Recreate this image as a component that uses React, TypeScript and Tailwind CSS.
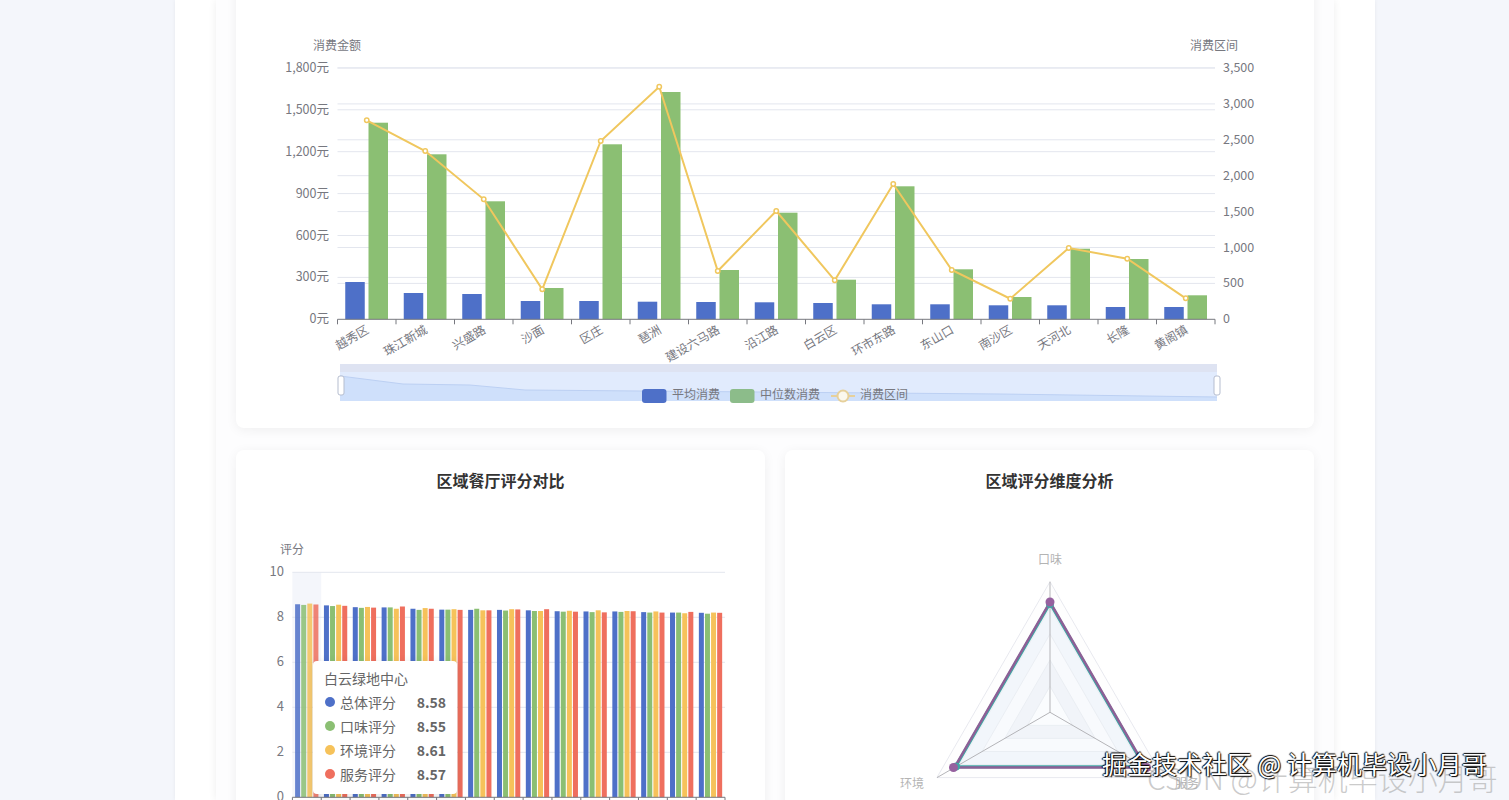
const regions = ['越秀区', '珠江新城', '兴盛路', '沙面', '区庄', '琶洲', '建设六马路', '沿江路', '白云区', '环市东路', '东山口', '南沙区', '天河北', '长隆', '黄阁镇']
const blueTops = [282, 293, 294, 301, 301, 301.7, 302, 302.3, 303, 304.3, 304.3, 305.3, 305.3, 307, 307]
const greenTops = [122.7, 154.3, 201.3, 288, 144.3, 92, 270, 212.7, 279.7, 186.3, 269.3, 297, 248.7, 259, 295.3]
const lineTops = [120.3, 151, 199.3, 289.3, 141, 86.7, 271, 211, 280.3, 184, 270, 298.7, 248, 258.7, 298.3]

const scores = [
  [8.58, 8.55, 8.61, 8.57],
  [8.53, 8.5, 8.56, 8.51],
  [8.45, 8.42, 8.46, 8.43],
  [8.44, 8.44, 8.38, 8.48],
  [8.38, 8.33, 8.41, 8.38],
  [8.34, 8.34, 8.36, 8.33],
  [8.33, 8.38, 8.31, 8.31],
  [8.33, 8.3, 8.36, 8.35],
  [8.31, 8.28, 8.28, 8.36],
  [8.27, 8.25, 8.29, 8.25],
  [8.26, 8.23, 8.31, 8.22],
  [8.26, 8.24, 8.28, 8.27],
  [8.23, 8.21, 8.26, 8.21],
  [8.21, 8.21, 8.18, 8.24],
  [8.2, 8.16, 8.21, 8.2],
]
const scoreColors = ['#4e70c8', '#8bbf73', '#f6c25a', '#ef6f5e']

const tooltipRows = [
  { name: '总体评分', value: '8.58', dot: 'bg-[#4e70c8]' },
  { name: '口味评分', value: '8.55', dot: 'bg-[#8bbf73]' },
  { name: '环境评分', value: '8.61', dot: 'bg-[#f6c25a]' },
  { name: '服务评分', value: '8.57', dot: 'bg-[#ef6f5e]' },
]

const AXIS = '#77787f'
const GRID = '#e3e6ee'

function ConsumptionChart() {
  const x0 = 337.5
  const step = 58.5
  const bottom = 319.3
  const leftTicks = ['0元', '300元', '600元', '900元', '1,200元', '1,500元', '1,800元']
  const rightTicks = ['0', '500', '1,000', '1,500', '2,000', '2,500', '3,000', '3,500']
  const linePoints = lineTops.map((y, i) => `${x0 + step * i + 29.25},${y}`).join(' ')

  return (
    <svg width="1078" height="448" viewBox="236 -20 1078 448" className="block">
      {leftTicks.map((t, i) => {
        const y = bottom - 41.9 * i
        return (
          <g key={t}>
            {i > 0 && <line x1={x0} x2={1215} y1={y} y2={y} stroke={GRID} />}
            <text x={329} y={y + 4} textAnchor="end" fontSize="12.5" fill={AXIS}>{t}</text>
          </g>
        )
      })}
      {rightTicks.map((t, i) => {
        const y = bottom - 35.9 * i
        return (
          <g key={t}>
            {i > 0 && <line x1={x0} x2={1215} y1={y} y2={y} stroke={GRID} />}
            <text x={1223} y={y + 4} fontSize="12.5" fill={AXIS}>{t}</text>
          </g>
        )
      })}
      <text x={337} y={50} textAnchor="middle" fontSize="12" fill={AXIS}>消费金额</text>
      <text x={1214} y={50} textAnchor="middle" fontSize="12" fill={AXIS}>消费区间</text>

      {regions.map((name, i) => {
        const x = x0 + step * i
        const cx = x + 29.25
        return (
          <g key={name}>
            <rect x={x + 7.75} y={blueTops[i]} width={19.5} height={bottom - blueTops[i]} fill="#4e70c8" />
            <rect x={x + 31} y={greenTops[i]} width={19.5} height={bottom - greenTops[i]} fill="#8bbf73" />
            <line x1={x} x2={x} y1={bottom} y2={bottom + 5} stroke={AXIS} />
            <text x={cx} y={333} textAnchor="end" fontSize="12" fill={AXIS} transform={`rotate(-30 ${cx} 327)`}>{name}</text>
          </g>
        )
      })}
      <line x1={1215} x2={1215} y1={bottom} y2={bottom + 5} stroke={AXIS} />
      <line x1={x0} x2={1215} y1={bottom} y2={bottom} stroke={AXIS} />
      <polyline points={linePoints} fill="none" stroke="#f0c75e" strokeWidth="2" />
      {lineTops.map((y, i) => (
        <circle key={i} cx={x0 + step * i + 29.25} cy={y} r="2.2" fill="#fff" stroke="#f0c75e" strokeWidth="1.5" />
      ))}

      {/* data zoom */}
      <rect x={340} y={364} width={877} height={37} fill="#e1ebfd" />
      <rect x={340} y={364} width={877} height={8} fill="#dee3f2" />
      <polygon points="340,376 403,384 470,385 525,390 640,391 1000,394 1217,397 1217,401 340,401" fill="#cfe0fb" />
      <polyline points="340,376 403,384 470,385 525,390 640,391 1000,394 1217,397" fill="none" stroke="#bcd0f3" />
      <rect x={338} y={376} width={6} height={19} rx={2} fill="#fff" stroke="#b5bdcf" />
      <rect x={1214} y={376} width={6} height={19} rx={2} fill="#fff" stroke="#b5bdcf" />

      {/* legend */}
      <rect x={642} y={389} width={24.5} height={14} rx={3} fill="#4e70c8" />
      <text x={672} y={399} fontSize="12" fill={AXIS}>平均消费</text>
      <rect x={730} y={389} width={24.5} height={14} rx={3} fill="#8cbc8a" />
      <text x={760} y={399} fontSize="12" fill={AXIS}>中位数消费</text>
      <line x1={831} x2={855} y1={396} y2={396} stroke="#e6d09b" strokeWidth="2" />
      <circle cx={843} cy={396} r={5.5} fill="#fbf8ee" stroke="#e6d09b" strokeWidth="2" />
      <text x={860} y={399} fontSize="12" fill={AXIS}>消费区间</text>
    </svg>
  )
}

function ScoreChart() {
  const x0 = 292.4
  const step = 28.84
  const bottom = 797.3
  return (
    <svg width="529" height="298" viewBox="236 512 529 298" className="block">
      <rect x={x0} y={572.3} width={step} height={225} fill="#f4f6fb" />
      {[0, 2, 4, 6, 8, 10].map((t) => {
        const y = bottom - t * 22.5
        return (
          <g key={t}>
            {t > 0 && <line x1={x0} x2={725} y1={y} y2={y} stroke={GRID} />}
            <text x={284} y={y + 3.5} textAnchor="end" fontSize="13" fill={AXIS}>{t}</text>
          </g>
        )
      })}
      <text x={292} y={554} textAnchor="middle" fontSize="12" fill={AXIS}>评分</text>
      {scores.map((row, i) => (
        <g key={i} opacity={i === 0 ? 0.85 : 1}>
          {row.map((v, j) => (
            <rect
              key={j}
              x={x0 + step * i + 2.7 + j * 6.1}
              y={bottom - v * 22.5}
              width={5}
              height={v * 22.5}
              fill={scoreColors[j]}
            />
          ))}
        </g>
      ))}
      {scores.map((_, i) => (
        <line key={i} x1={x0 + step * i} x2={x0 + step * i} y1={bottom} y2={bottom + 5} stroke={AXIS} />
      ))}
      <line x1={725} x2={725} y1={bottom} y2={bottom + 5} stroke={AXIS} />
      <line x1={x0} x2={725} y1={bottom} y2={bottom} stroke={AXIS} />
    </svg>
  )
}

function triangle(r: number) {
  const cx = 1050
  const cy = 712.3
  const dx = r * 0.866
  const dy = r * 0.5
  return `${cx},${cy - r} ${cx + dx},${cy + dy} ${cx - dx},${cy + dy}`
}

function RadarChart() {
  const R = 130.6
  return (
    <svg width="529" height="298" viewBox="785 512 529 298" className="block">
      <polygon points={triangle(R)} fill="#fefefe" stroke="#e8e9ef" />
      <polygon points={triangle(R * 0.8)} fill="#f7f9fc" stroke="#eef0f4" />
      <polygon points={triangle(R * 0.6)} fill="#fdfdfe" stroke="#eef0f4" />
      <polygon points={triangle(R * 0.4)} fill="#f6f7fa" stroke="#eef0f4" />
      <polygon points={triangle(R * 0.2)} fill="#fff" stroke="#eef0f4" />
      <polygon points={triangle(R * 0.845)} fill="#b9dcec" fillOpacity="0.08" />
      <line x1={1050} y1={712.3} x2={1050} y2={581.7} stroke="#b4b4b8" />
      <line x1={1050} y1={712.3} x2={937} y2={777.6} stroke="#b4b4b8" />
      <line x1={1050} y1={712.3} x2={1163} y2={777.6} stroke="#b4b4b8" />
      <polygon points={triangle(R * 0.835)} fill="none" stroke="#3fa7a5" strokeWidth="3" />
      <polygon points={triangle(R * 0.845)} fill="none" stroke="#8d6096" strokeWidth="2.5" />
      <circle cx={1050} cy={604} r={4} fill="#3fa7a5" />
      <circle cx={1050} cy={602} r={4.5} fill="#96619f" />
      <circle cx={956} cy={766.5} r={4} fill="#3fa7a5" />
      <circle cx={953.5} cy={767.5} r={4.5} fill="#96619f" />
      <circle cx={1146.5} cy={767.5} r={4.5} fill="#96619f" />
      <text x={1050} y={564} textAnchor="middle" fontSize="12" fill="#b4b4b4">口味</text>
      <text x={912} y={788} textAnchor="middle" fontSize="12" fill="#b4b4b4">环境</text>
      <text x={1187} y={788} textAnchor="middle" fontSize="12" fill="#b4b4b4">服务</text>
    </svg>
  )
}

export default function App() {
  return (
    <div className="relative h-[800px] overflow-hidden bg-[#f4f6fb] font-['Noto_Sans_CJK_SC',sans-serif]">
      <div className="ml-[175px] h-full w-[1200px] bg-white px-[41px] shadow-[0_0_4px_rgba(0,0,0,0.06)]">
        <div className="flex h-full flex-col bg-[#fdfdfe] px-5 shadow-[0_0_8px_rgba(0,0,0,0.07)]">
          <div className="-mt-5 shrink-0 rounded-lg bg-white shadow-[0_2px_12px_rgba(0,0,0,0.06)]">
            <ConsumptionChart />
          </div>
          <div className="mt-[22px] grid shrink-0 grid-cols-2 gap-5">
            <div className="relative h-[400px] rounded-lg bg-white shadow-[0_2px_12px_rgba(0,0,0,0.06)]">
              <h3 className="h-[62px] pt-[18px] text-center text-base leading-6 font-bold text-[#333]">区域餐厅评分对比</h3>
              <ScoreChart />
              <div className="absolute top-[211px] left-[77px] h-[133px] w-[144px] rounded bg-white px-[11px] py-[5px] text-sm leading-6 text-[#666] shadow-[1px_2px_10px_rgba(0,0,0,0.1)]">
                <div>白云绿地中心</div>
                {tooltipRows.map((r) => (
                  <div key={r.name} className="flex items-center">
                    <span className={`mr-[5px] ml-[1px] h-[10px] w-[10px] rounded-full ${r.dot}`} />
                    <span>{r.name}</span>
                    <span className="ml-auto font-bold">{r.value}</span>
                  </div>
                ))}
              </div>
            </div>
            <div className="h-[400px] rounded-lg bg-white shadow-[0_2px_12px_rgba(0,0,0,0.06)]">
              <h3 className="h-[62px] pt-[18px] text-center text-base leading-6 font-bold text-[#333]">区域评分维度分析</h3>
              <RadarChart />
            </div>
          </div>
        </div>
      </div>
      <div className="absolute top-[760px] left-[1147px] text-[30px] leading-[34px] font-light whitespace-nowrap text-[#a8a8a8]/60">CSDN @计算机毕设小月哥</div>
      <div className="absolute top-[746px] left-[1102px] text-[25px] leading-[34px] whitespace-nowrap text-white [text-shadow:1px_1px_1px_#000,-1px_0_1px_#000,0_-1px_1px_#000]">掘金技术社区 @ 计算机毕设小月哥</div>
    </div>
  )
}
